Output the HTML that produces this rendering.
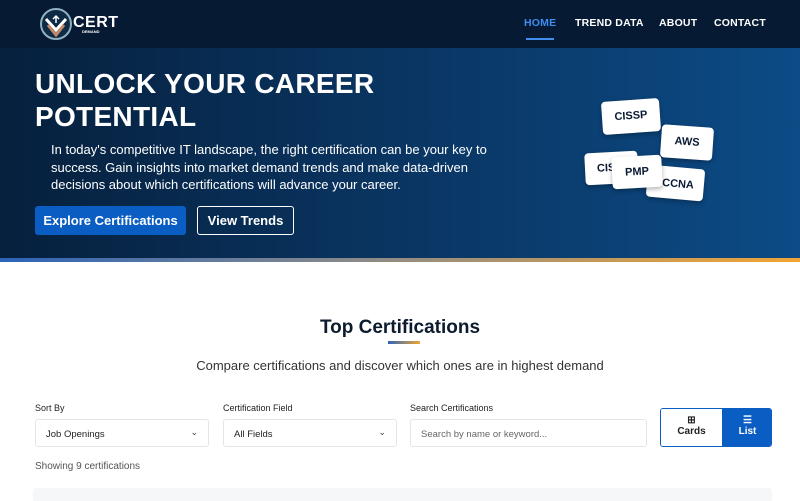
<!DOCTYPE html>
<html><head><meta charset="utf-8"><style>
*{margin:0;padding:0;box-sizing:border-box}
body{width:800px;height:501px;overflow:hidden;background:#fff;font-family:"Liberation Sans",sans-serif;position:relative}
.hdr{position:absolute;left:0;top:0;width:800px;height:48px;background:#061a33}
.nav a{position:absolute;top:17px;color:#fff;font-size:10.5px;font-weight:bold;letter-spacing:.2px}
.hero{position:absolute;left:0;top:48px;width:800px;height:210px;background:linear-gradient(90deg,#06203d 0%,#0a3562 50%,#0c4b86 100%)}
.stripe{position:absolute;left:0;top:258px;width:800px;height:4px;background:linear-gradient(90deg,#2c64b8,#8a8a8a 45%,#f1a534)}
h1{position:absolute;left:35px;top:67px;color:#fff;font-size:28px;line-height:33px;font-weight:bold;letter-spacing:.3px}
.p{position:absolute;left:51px;top:141px;width:445px;color:#fff;font-size:13px;line-height:17.5px}
.b1{position:absolute;left:35px;top:206px;width:151px;height:29px;background:#0a5dc2;color:#fff;font-size:13px;font-weight:bold;text-align:center;line-height:29px;border-radius:3px}
.b2{position:absolute;left:197px;top:206px;width:97px;height:29px;border:1px solid #fff;color:#fff;font-size:13px;font-weight:bold;text-align:center;line-height:27px;border-radius:3px}
.c{position:absolute;background:#fff;border-radius:4px;font-size:11px;font-weight:bold;color:#0a1b33;text-align:center;box-shadow:0 2px 5px rgba(0,0,0,.3)}
.lbl{position:absolute;top:403px;font-size:9px;color:#222}
.sel{position:absolute;top:419px;height:28px;border:1px solid #e3e5ea;border-radius:3px;font-size:9.5px;color:#222;padding:9px 10px;background:#fff}
.sel i{position:absolute;right:10px;top:7px;font-style:normal;font-size:9px;color:#444}
</style></head><body>
<div class="hdr">
<svg style="position:absolute;left:40px;top:8px" width="32" height="32" viewBox="0 0 32 32"><circle cx="16" cy="16" r="15" fill="#0f2a45" stroke="#8fb1c0" stroke-width="2"/><path d="M6 11 L16 22 L26 11" fill="none" stroke="#fff" stroke-width="3"/><path d="M8 17 L16 27 L24 17" fill="none" stroke="#c08a6a" stroke-width="3"/><path d="M16 15V8M13 11l3-3 3 3" stroke="#fff" stroke-width="1.5" fill="none"/></svg>
<div style="position:absolute;left:73px;top:14px;color:#fff;font-size:16px;font-weight:bold;letter-spacing:.5px">CERT</div>
<div style="position:absolute;left:82px;top:29px;color:#fff;font-size:4px;font-weight:bold">DEMAND</div>
<div class="nav"><a style="left:524px;color:#3f8ef0">HOME</a><a style="left:575px">TREND DATA</a><a style="left:659px">ABOUT</a><a style="left:714px">CONTACT</a></div>
<div style="position:absolute;left:526px;top:38px;width:28px;height:2px;background:#3f8ef0"></div>
</div>
<div class="hero"></div>
<div class="stripe"></div>
<h1>UNLOCK YOUR CAREER<br>POTENTIAL</h1>
<div class="p">In today's competitive IT landscape, the right certification can be your key to success. Gain insights into market demand trends and make data-driven decisions about which certifications will advance your career.</div>
<div class="b1">Explore Certifications</div>
<div class="b2">View Trends</div>
<div class="c" style="left:602px;top:100px;width:58px;height:33px;line-height:33px;transform:rotate(-4deg)">CISSP</div>
<div class="c" style="left:661px;top:126px;width:52px;height:33px;line-height:33px;transform:rotate(4deg)">AWS</div>
<div class="c" style="left:647px;top:167px;width:57px;height:32px;line-height:34px;transform:rotate(5deg);text-align:right;padding-right:10px">CCNA</div>
<div class="c" style="left:585px;top:152px;width:53px;height:32px;line-height:32px;text-align:left;padding-left:12px;transform:rotate(-3deg)">CIS</div>
<div class="c" style="left:612px;top:156px;width:50px;height:32px;line-height:32px;transform:rotate(-3deg)">PMP</div>
<div style="position:absolute;left:0;top:317px;width:800px;text-align:center;font-size:19px;font-weight:bold;color:#0d1b2e">Top Certifications</div>
<div style="position:absolute;left:388px;top:341px;width:32px;height:3px;background:linear-gradient(90deg,#2c64b8,#f1a534)"></div>
<div style="position:absolute;left:0;top:358px;width:800px;text-align:center;font-size:13px;color:#333">Compare certifications and discover which ones are in highest demand</div>
<div class="lbl" style="left:35px">Sort By</div>
<div class="lbl" style="left:223px">Certification Field</div>
<div class="lbl" style="left:410px">Search Certifications</div>
<div class="sel" style="left:35px;width:174px">Job Openings<i>⌄</i></div>
<div class="sel" style="left:223px;width:174px">All Fields<i>⌄</i></div>
<div class="sel" style="left:410px;width:237px;color:#666">Search by name or keyword...</div>
<div style="position:absolute;left:660px;top:408px;width:112px;height:39px;border:1px solid #0a5dc2;border-radius:3px;overflow:hidden">
<div style="position:absolute;left:0;top:0;width:61px;height:37px;background:#fff;text-align:center;font-size:10px;font-weight:bold;color:#222;padding-top:6px">⊞<br>Cards</div>
<div style="position:absolute;left:61px;top:0;width:51px;height:37px;background:#0a5dc2;text-align:center;font-size:10px;font-weight:bold;color:#fff;padding-top:6px">☰<br>List</div>
</div>
<div style="position:absolute;left:35px;top:461px;font-size:10px;color:#555">Showing 9 certifications</div>
<div style="position:absolute;left:33px;top:488px;width:739px;height:13px;background:#f6f7f8;border-radius:4px 4px 0 0"></div>
</body></html>
